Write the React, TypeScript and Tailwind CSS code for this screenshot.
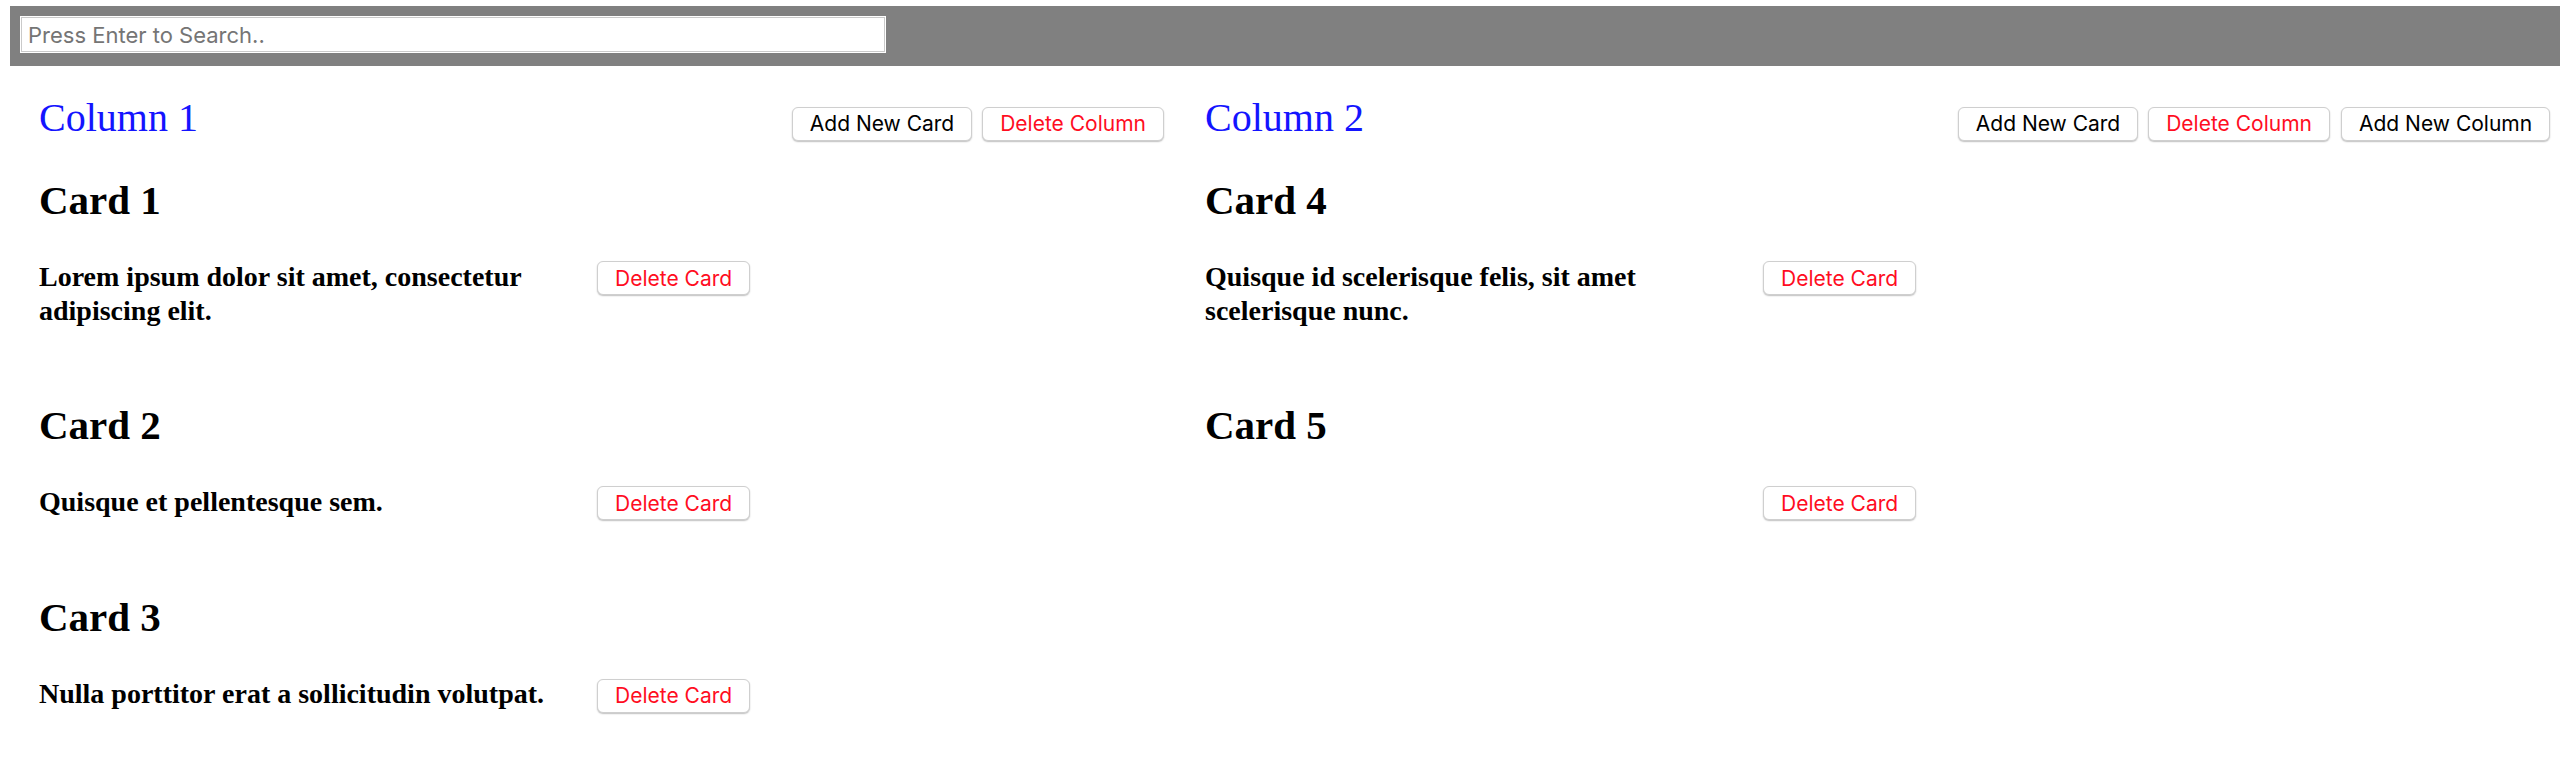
import React from "react";

type Card = { id: number; title: string; text: string };
type Column = { id: number; title: string; cards: Card[] };

const columns: Column[] = [
  {
    id: 1,
    title: "Column 1",
    cards: [
      { id: 1, title: "Card 1", text: "Lorem ipsum dolor sit amet, consectetur adipiscing elit." },
      { id: 2, title: "Card 2", text: "Quisque et pellentesque sem." },
      { id: 3, title: "Card 3", text: "Nulla porttitor erat a sollicitudin volutpat." },
    ],
  },
  {
    id: 2,
    title: "Column 2",
    cards: [
      { id: 4, title: "Card 4", text: "Quisque id scelerisque felis, sit amet scelerisque nunc." },
      { id: 5, title: "Card 5", text: "" },
    ],
  },
];

const sans = { fontFamily: "Inter, 'Noto Sans', sans-serif" };
const serif = { fontFamily: "'Liberation Serif', 'Times New Roman', serif" };

function Btn({ children, red }: { children: React.ReactNode; red?: boolean }) {
  return (
    <button
      style={sans}
      className={
        "inline-flex h-[34px] shrink-0 items-center whitespace-nowrap rounded-[6px] border border-[#cfcfcf] bg-white px-[17px] text-[21px] leading-none shadow-[0_1px_1.5px_rgba(0,0,0,0.25)] " +
        (red ? "text-[#ff0d1f]" : "text-black")
      }
    >
      {children}
    </button>
  );
}

function ColumnView({ col, last }: { col: Column; last?: boolean }) {
  return (
    <div className={last ? "ml-[41px] flex-1 min-w-0" : "w-[1125px] shrink-0"}>
      <div className="flex items-baseline">
        <div className={last ? "w-[1125px] flex items-baseline justify-between shrink-0" : "flex w-full items-baseline justify-between"}>
          <h1 style={serif} className="text-[40px] leading-none font-normal text-[#1414ff]">
            {col.title}
          </h1>
          <div className="flex items-baseline gap-[10px]">
            <Btn>Add New Card</Btn>
            <Btn red>Delete Column</Btn>
          </div>
        </div>
        {last && (
          <div className="ml-[11px] shrink-0">
            <Btn>Add New Column</Btn>
          </div>
        )}
      </div>
      <div className="mt-[39px]">
        {col.cards.map((c) => (
          <div key={c.id} className="mb-[77px]">
            <h2 style={serif} className="text-[41px] leading-none font-bold text-black">
              {c.title}
            </h2>
            <div className="mt-[39px] flex items-baseline">
              <p style={serif} className="w-[545px] mr-[13px] shrink-0 text-[28px] leading-[34px] font-bold text-black">
                {c.text || "\u00a0"}
              </p>
              <Btn red>Delete Card</Btn>
            </div>
          </div>
        ))}
      </div>
    </div>
  );
}

export default function App() {
  return (
    <div className="min-h-screen bg-white">
      <div className="pt-[6px] pl-[10px]">
        <div className="h-[60px] bg-[#808080] pt-[10px] pl-[10px]">
          <input
            style={sans}
            placeholder="Press Enter to Search.."
            className="h-[37px] w-[866px] border border-white bg-white pl-[7px] text-[22px] text-black shadow-[inset_0_0_0_1px_#cacaca] outline-none placeholder:text-[#757575]"
          />
        </div>
      </div>
      <div className="flex pl-[39px] pt-[32px]">
        <ColumnView col={columns[0]} />
        <ColumnView col={columns[1]} last />
      </div>
    </div>
  );
}
